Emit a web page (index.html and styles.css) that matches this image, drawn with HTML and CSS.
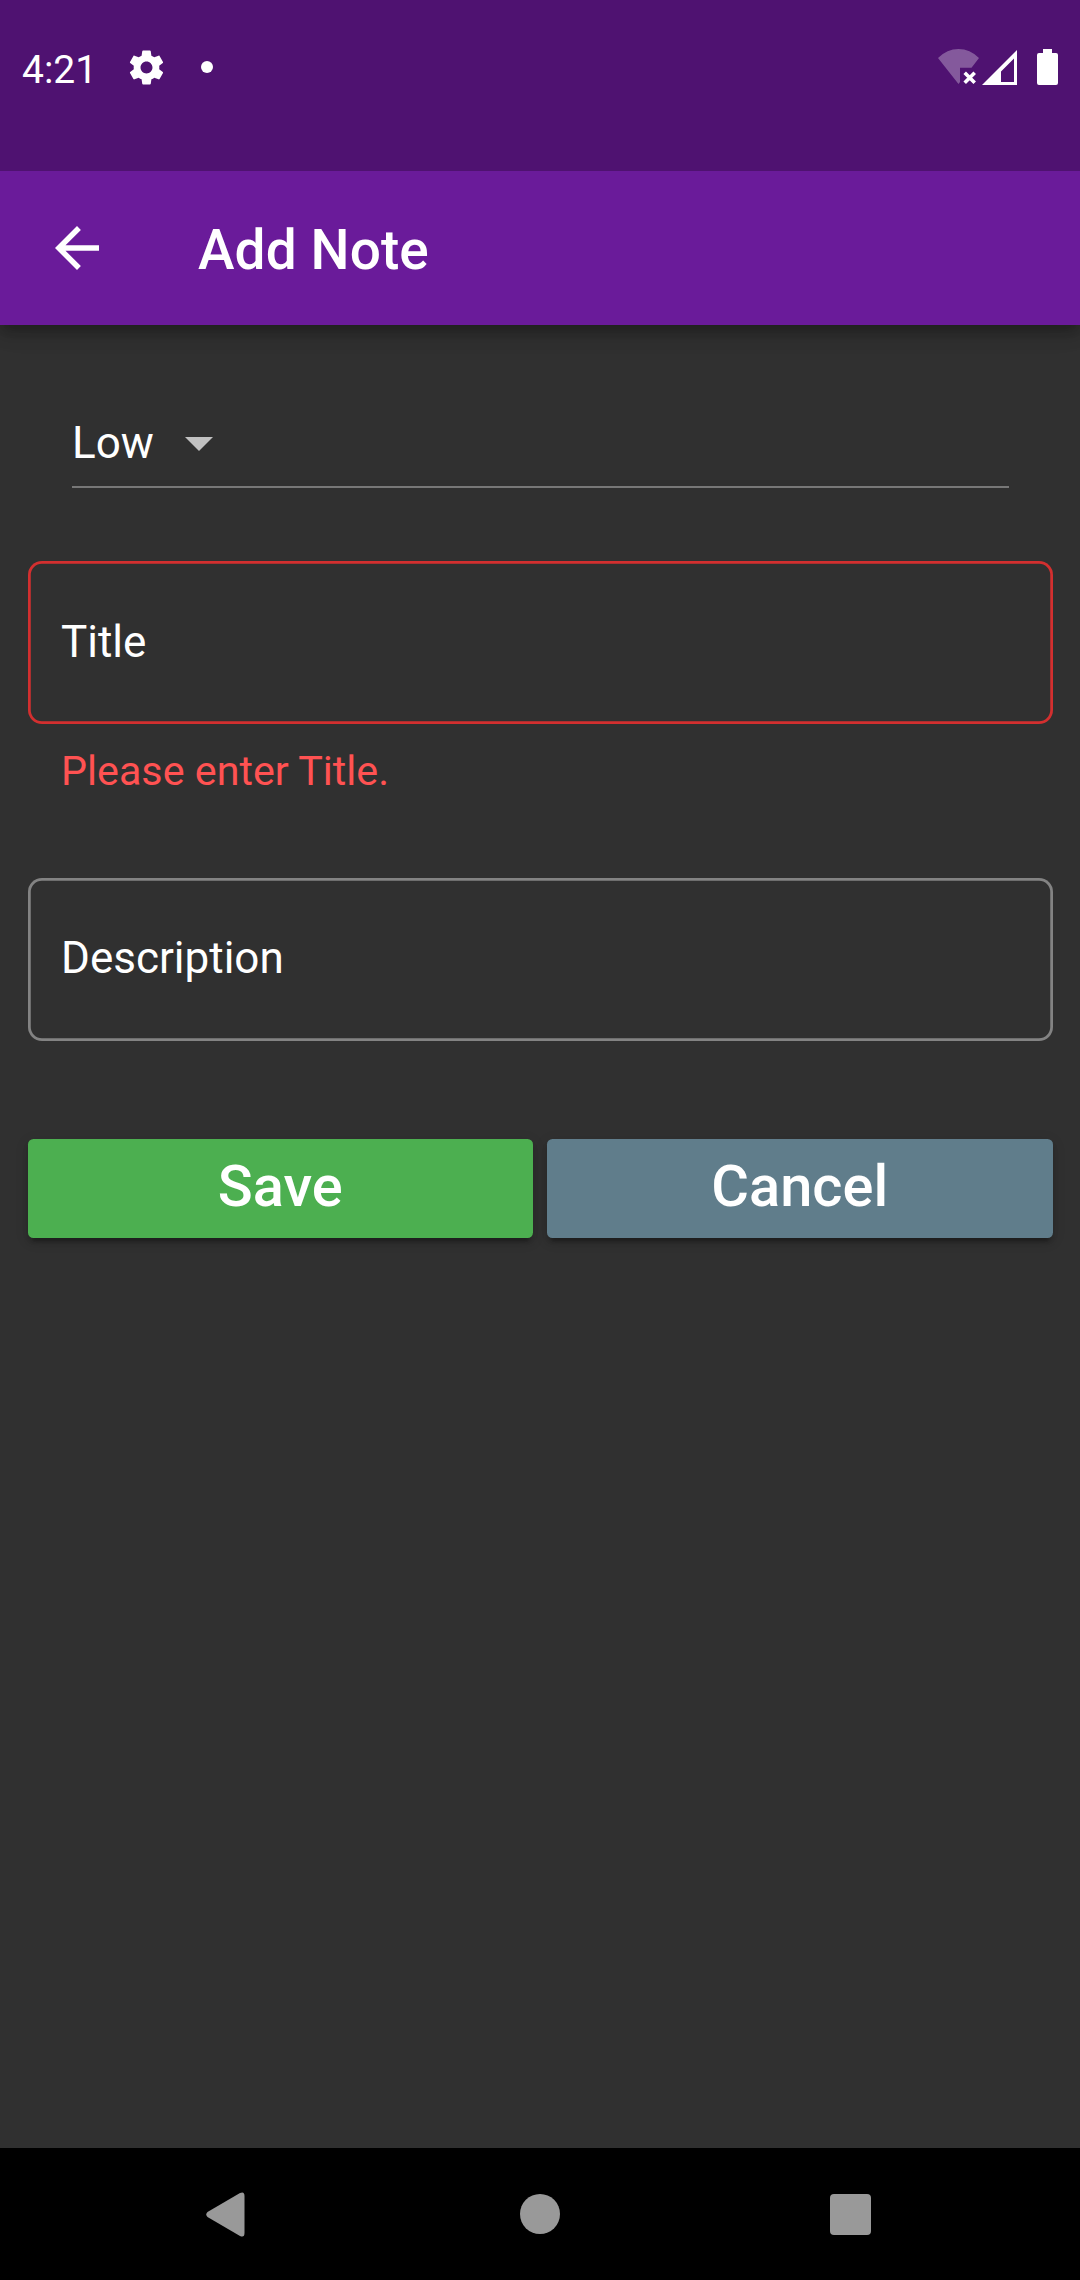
FILE: index.html
```html
<!DOCTYPE html>
<html lang="en">
<head>
<meta charset="utf-8">
<title>Add Note</title>
<link rel="stylesheet" href="styles.css">
</head>
<body>
<div class="screen">
  <header class="status">
    <div class="status-left">
      <span class="clock">4:21</span>
      <svg class="gear" viewBox="0 0 24 24"><path d="M19.43 12.98c.04-.32.07-.64.07-.98s-.03-.66-.07-.98l2.11-1.65c.19-.15.24-.42.12-.64l-2-3.46c-.12-.22-.39-.3-.61-.22l-2.49 1c-.52-.4-1.08-.73-1.69-.98l-.38-2.65C14.46 2.18 14.25 2 14 2h-4c-.25 0-.46.18-.49.42l-.38 2.65c-.61.25-1.17.59-1.69.98l-2.49-1c-.23-.09-.49 0-.61.22l-2 3.46c-.13.22-.07.49.12.64l2.11 1.65c-.04.32-.07.65-.07.98s.03.66.07.98l-2.11 1.65c-.19.15-.24.42-.12.64l2 3.46c.12.22.39.3.61.22l2.49-1c.52.4 1.08.73 1.69.98l.38 2.65c.03.24.24.42.49.42h4c.25 0 .46-.18.49-.42l.38-2.65c.61-.25 1.17-.59 1.69-.98l2.49 1c.23.09.49 0 .61-.22l2-3.46c.12-.22.07-.49-.12-.64l-2.11-1.65zM12 15.5c-1.93 0-3.5-1.57-3.5-3.5s1.57-3.5 3.5-3.5 3.5 1.57 3.5 3.5-1.57 3.5-3.5 3.5z"/></svg>
      <span class="dot"></span>
    </div>
    <div class="status-right">
      <svg class="wifi" viewBox="0 0 41 36"><path class="faint" d="M0 9Q9 0 20.5 0T41 9L33.5 18.7H22V33L20.5 35z"/><path class="cross" d="M26.700 23.700l10 10m0-10l-10 10"/></svg>
      <svg class="signal" viewBox="0 0 35 35"><path fill-rule="evenodd" d="M35 0V35H0zM32 8.500L19 21.500V32H32z"/></svg>
      <svg class="battery" viewBox="0 0 21 36"><path d="M6 0h9v4h4q2 0 2 2v28q0 2-2 2H2q-2 0-2-2V6q0-2 2-2h4z"/></svg>
    </div>
  </header>
  <div class="appbar">
    <svg class="back" viewBox="0 0 16 16"><path d="M16 7H3.830l5.590-5.590L8 0 0 8l8 8 1.410-1.410L3.830 9H16z"/></svg>
    <h1 class="title">Add Note</h1>
  </div>
  <main class="form">
    <div class="select">
      <span>Low</span>
      <svg class="caret" viewBox="0 0 10 5"><path d="M0 0l5 5 5-5z"/></svg>
    </div>
    <div class="field field-invalid">Title</div>
    <p class="error">Please enter Title.</p>
    <div class="field field-description">Description</div>
    <div class="actions">
      <button class="button save">Save</button>
      <button class="button cancel">Cancel</button>
    </div>
  </main>
  <nav class="navbar">
    <svg class="nav-back" viewBox="0 0 39 45"><path d="M34 1Q38.500-1 38.500 4V41Q38.500 46 34 44L1.500 25Q-1 22.500 1.500 20z"/></svg>
    <span class="nav-home"></span>
    <span class="nav-recent"></span>
  </nav>
</div>
</body>
</html>
```
FILE: styles.css
```css
* {
  box-sizing: border-box;
}

body {
  margin: 0;
  background: #303030;
  color: #fff;
  font-family: Roboto, "Noto Sans", sans-serif;
  font-size: 44px;
}

svg {
  display: block;
  flex: none;
  fill: #fff;
}

.screen {
  display: flex;
  flex-direction: column;
  width: 1080px;
  height: 2280px;
  overflow: hidden;
}

.status {
  z-index: 2;
  display: flex;
  justify-content: space-between;
  align-items: flex-start;
  height: 171px;
  padding: 47px 22px 0;
  background: #4f1271;
}

.status-left,
.status-right {
  display: flex;
  align-items: center;
  height: 41px;
}

.status-right {
  height: 40px;
}

.clock {
  width: 104px;
  padding-top: 5px;
  font-size: 39px;
  line-height: 46px;
}

.gear {
  width: 41px;
  height: 41px;
}

.dot {
  width: 12px;
  height: 12px;
  margin: -1px 0 0 34px;
  border-radius: 50%;
  background: #fff;
}

.wifi {
  width: 41px;
  height: 36px;
}

.faint {
  opacity: .3;
}

.cross {
  fill: none;
  stroke: #fff;
  stroke-width: 3.600;
}

.signal {
  width: 35px;
  height: 35px;
  margin-left: 3px;
}

.battery {
  width: 21px;
  height: 36px;
  margin-left: 20px;
}

.appbar {
  z-index: 1;
  display: flex;
  align-items: center;
  height: 154px;
  padding-left: 55px;
  background: #6a1b9a;
  box-shadow: 0 5px 11px -3px rgba(0, 0, 0, .2), 0 11px 14px rgba(0, 0, 0, .14), 0 3px 27px rgba(0, 0, 0, .12);
}

.back {
  width: 44px;
  height: 44px;
}

.title {
  margin: 0 0 0 99px;
  padding-top: 4px;
  font-size: 55px;
  font-weight: 500;
  line-height: 64px;
  letter-spacing: .1px;
}

.form {
  flex: 1;
  padding: 77px 27px 0 28px;
}

.select {
  display: flex;
  align-items: center;
  height: 86px;
  margin: 0 44px 73px;
  padding-bottom: 2px;
  border-bottom: 2px solid #777;
}

.caret {
  width: 28px;
  height: 14px;
  margin: 2px 0 0 31px;
  fill: #c1c1c1;
}

.field {
  display: flex;
  align-items: center;
  height: 162.500px;
  padding-left: 33px;
  border-radius: 14px;
  box-shadow: inset 0 0 0 2.750px #838383;
}

.field-invalid {
  box-shadow: inset 0 0 0 2.750px #d32f2f;
}

.field-description {
  padding-bottom: 2px;
}

.error {
  height: 154.500px;
  margin: 0;
  padding: 23px 33px 0;
  color: #ff5252;
  font-size: 41.250px;
  line-height: 48px;
}

.actions {
  display: flex;
  gap: 14px;
  margin: 98.500px .500px 0 -.500px;
}

.button {
  flex: 1;
  height: 99px;
  padding: 0 0 6px;
  border: 0;
  border-radius: 5.500px;
  color: #fff;
  font: 500 57.750px/68px Roboto, "Noto Sans", sans-serif;
  box-shadow: 0 8px 3px -5px rgba(0, 0, 0, .2), 0 5px 5px rgba(0, 0, 0, .14), 0 3px 14px rgba(0, 0, 0, .12);
}

.save {
  background: #4caf50;
}

.cancel {
  background: #607d8b;
}

.navbar {
  display: flex;
  align-items: center;
  height: 132px;
  padding-left: 206px;
  background: #000;
}

.nav-back {
  width: 39px;
  height: 45px;
  fill: #999;
}

.nav-home {
  width: 40px;
  height: 40px;
  margin-left: 275px;
  border-radius: 50%;
  background: #999;
}

.nav-recent {
  width: 41px;
  height: 41px;
  margin-left: 270px;
  border-radius: 4px;
  background: #999;
}
```
